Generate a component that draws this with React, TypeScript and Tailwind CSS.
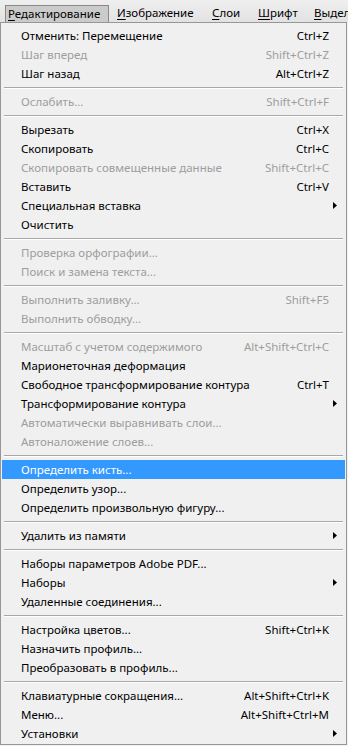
import React from 'react';

type Item = {
  label: string;
  shortcut?: string;
  disabled?: boolean;
  submenu?: boolean;
  active?: boolean;
};

// Edit menu, split into the groups between separators
const GROUPS: Item[][] = [
  [
    { label: 'Отменить: Перемещение', shortcut: 'Ctrl+Z' },
    { label: 'Шаг вперед', shortcut: 'Shift+Ctrl+Z', disabled: true },
    { label: 'Шаг назад', shortcut: 'Alt+Ctrl+Z' },
  ],
  [{ label: 'Ослабить...', shortcut: 'Shift+Ctrl+F', disabled: true }],
  [
    { label: 'Вырезать', shortcut: 'Ctrl+X' },
    { label: 'Скопировать', shortcut: 'Ctrl+C' },
    { label: 'Скопировать совмещенные данные', shortcut: 'Shift+Ctrl+C', disabled: true },
    { label: 'Вставить', shortcut: 'Ctrl+V' },
    { label: 'Специальная вставка', submenu: true },
    { label: 'Очистить' },
  ],
  [
    { label: 'Проверка орфографии...', disabled: true },
    { label: 'Поиск и замена текста...', disabled: true },
  ],
  [
    { label: 'Выполнить заливку...', shortcut: 'Shift+F5', disabled: true },
    { label: 'Выполнить обводку...', disabled: true },
  ],
  [
    { label: 'Масштаб с учетом содержимого', shortcut: 'Alt+Shift+Ctrl+C', disabled: true },
    { label: 'Марионеточная деформация' },
    { label: 'Свободное трансформирование контура', shortcut: 'Ctrl+T' },
    { label: 'Трансформирование контура', submenu: true },
    { label: 'Автоматически выравнивать слои...', disabled: true },
    { label: 'Автоналожение слоев...', disabled: true },
  ],
  [
    { label: 'Определить кисть...', active: true },
    { label: 'Определить узор...' },
    { label: 'Определить произвольную фигуру...' },
  ],
  [{ label: 'Удалить из памяти', submenu: true }],
  [
    { label: 'Наборы параметров Adobe PDF...' },
    { label: 'Наборы', submenu: true },
    { label: 'Удаленные соединения...' },
  ],
  [
    { label: 'Настройка цветов...', shortcut: 'Shift+Ctrl+K' },
    { label: 'Назначить профиль...' },
    { label: 'Преобразовать в профиль...' },
  ],
  [
    { label: 'Клавиатурные сокращения...', shortcut: 'Alt+Shift+Ctrl+K' },
    { label: 'Меню...', shortcut: 'Alt+Shift+Ctrl+M' },
    { label: 'Установки', submenu: true },
  ],
];

const FONT = { fontFamily: '"Segoe UI", "Noto Sans", "Open Sans", sans-serif' };

function SubArrow({ light }: { light?: boolean }) {
  return (
    <svg width="4" height="7" viewBox="0 0 4 7" className="absolute right-[8px] top-[6px]">
      <path d="M0 0 L4 3.5 L0 7 Z" fill={light ? '#ffffff' : '#000000'} />
    </svg>
  );
}

function MenuRow({ item }: { item: Item }) {
  const color = item.active
    ? 'text-white bg-[#3399ff]'
    : item.disabled
      ? 'text-[#9d9d9d]'
      : 'text-black';
  return (
    <div className={`relative flex h-[19px] items-center justify-between pl-[19px] pr-[16px] leading-[19px] ${color}`}>
      <span className="whitespace-nowrap">{item.label}</span>
      {item.shortcut && <span className="whitespace-nowrap">{item.shortcut}</span>}
      {item.submenu && <SubArrow light={item.active} />}
    </div>
  );
}

function Separator() {
  return (
    <div className="flex h-[9px] items-center px-[2px]">
      <div className="w-full border-t border-b border-t-[#a8a8a8] border-b-white" />
    </div>
  );
}

function TopItem({ first, rest, width }: { first: string; rest: string; width: string }) {
  return (
    <div className={`mt-[5px] h-[17px] shrink-0 whitespace-nowrap pl-[9px] leading-[15px] ${width}`}>
      <span className="underline underline-offset-2">{first}</span>
      {rest}
    </div>
  );
}

export default function App() {
  return (
    <div className="h-[746px] w-[348px] overflow-hidden bg-[#f0f0f0] text-[11.5px]" style={FONT}>
      {/* ── Menu bar ── */}
      <div className="flex h-[22px] overflow-hidden bg-gradient-to-b from-[#efefef] to-[#e2e2e2] text-black">
        <div className="ml-[5px] mt-[5px] h-[17px] w-[104px] shrink-0 border border-b-0 border-[#8a8a8a] bg-[#cbcbcb] pl-[2px] leading-[15px]">
          <span className="underline underline-offset-2">Р</span>едактирование
        </div>
        <TopItem first="И" rest="зображение" width="w-[95px] -ml-[1px]" />
        <TopItem first="С" rest="лои" width="w-[46px]" />
        <TopItem first="Ш" rest="рифт" width="w-[56px]" />
        <TopItem first="В" rest="ыделение" width="w-[80px]" />
      </div>

      {/* ── Dropdown ── */}
      <div className="w-[347px] border border-[#979797] bg-[#f0f0f0] px-[1px] pt-[3px] pb-[1px]">
        {GROUPS.map((group, gi) => (
          <React.Fragment key={gi}>
            {gi > 0 && <Separator />}
            {group.map((item) => (
              <MenuRow key={item.label} item={item} />
            ))}
          </React.Fragment>
        ))}
      </div>
    </div>
  );
}
